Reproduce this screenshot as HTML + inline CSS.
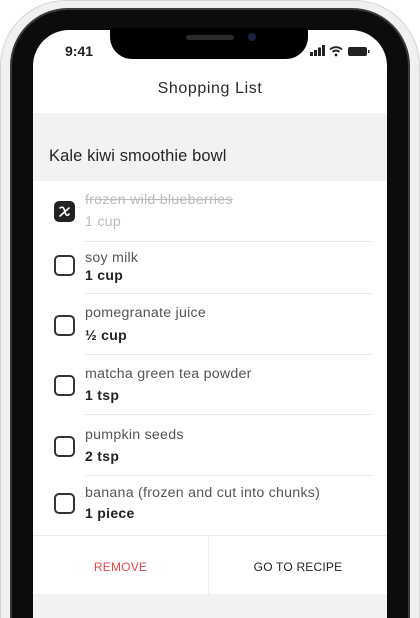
<!DOCTYPE html>
<html><head><style>
*{margin:0;padding:0;box-sizing:border-box}
html,body{width:420px;height:618px;overflow:hidden}
body{background:#fff;font-family:"Liberation Sans",sans-serif}
.wrap{position:relative;width:420px;height:618px;overflow:hidden}
.outer{position:absolute;left:0;top:0;width:420px;height:618px;border-radius:66px 66px 0 0;background:#f0f0f0;border:1px solid #d4d4d4;border-bottom:none}
.bezel{position:absolute;left:10px;top:8px;width:400px;height:610px;border-radius:58px 58px 0 0;background:#0c0c0c;border:2px solid #3a3a3a;border-bottom:none}
.screen{position:absolute;left:33px;top:30px;width:354px;height:588px;border-radius:36px 36px 0 0;background:#fff;overflow:hidden}
.notch{position:absolute;left:110px;top:28px;width:198px;height:31px;background:#000;border-radius:0 0 22px 22px}
.spk{position:absolute;left:186px;top:35px;width:48px;height:5px;border-radius:3px;background:#2a2a2a}
.cam{position:absolute;left:248px;top:33px;width:8px;height:8px;border-radius:50%;background:#1a2440}
.abs{position:absolute}
.time{left:65px;top:43px;font-weight:bold;font-size:14px;color:#222}
.hdr{left:33px;top:80px;width:354px;text-align:center;font-size:16px;color:#2a2a2a;letter-spacing:.6px}
.band{left:33px;top:113px;width:354px;height:68px;background:#f1f2f4}
.band2{left:33px;top:594px;width:354px;height:24px;background:#f1f2f4}
.title{left:49px;top:147px;font-size:16.5px;color:#252525;letter-spacing:.1px}
.cb{left:54px;width:21px;height:21px;border:2px solid #333;border-radius:5px}
.nm{left:85px;font-size:14.2px;color:#555;letter-spacing:.25px}
.qt{left:85px;font-size:14px;font-weight:bold;color:#222;letter-spacing:.3px}
.sep{left:85px;width:287px;height:1px;background:#e8e8e8}
.btns{left:33px;top:535px;width:354px;height:59px;border-top:1px solid #ececec}
.btns div{position:absolute;top:0;height:59px;line-height:62px;font-size:12px;text-align:center;letter-spacing:.2px}
</style></head><body><div class="wrap">
<div class="outer"></div>
<div class="bezel"></div>
<div class="screen"></div>
<div class="notch"></div><div class="spk"></div><div class="cam"></div>
<div class="abs time">9:41</div>
<svg class="abs" style="left:310px;top:45px" width="64" height="12">
<rect x="0" y="7" width="3" height="4" fill="#222"/><rect x="4" y="5" width="3" height="6" fill="#222"/><rect x="8" y="2.5" width="3" height="8.5" fill="#222"/><rect x="12" y="0" width="3" height="11" fill="#222"/>
<path d="M20 4.5a9 9 0 0 1 12 0M22.5 7a5 5 0 0 1 7 0" stroke="#222" stroke-width="1.8" fill="none"/><circle cx="26" cy="10" r="1.4" fill="#222"/>
<rect x="38" y="2" width="19" height="9" rx="2" fill="#222"/><rect x="58" y="5" width="1.5" height="3" fill="#222"/>
</svg>
<div class="abs hdr">Shopping List</div>
<div class="abs band"></div>
<div class="abs title">Kale kiwi smoothie bowl</div>

<div class="abs" style="left:54px;top:201px;width:21px;height:21px;border-radius:5px;background:#222"></div>
<svg class="abs" style="left:54px;top:201px" width="21" height="21"><path d="M6 7c3-2 4 0 5 4s3 4 4 2M15 7l-9 8" stroke="#fff" stroke-width="1.6" fill="none" stroke-linecap="round"/></svg>
<div class="abs nm" style="top:192px;color:#bbb;text-decoration:line-through">frozen wild blueberries</div>
<div class="abs nm" style="top:214px;color:#bbb">1 cup</div>
<div class="abs sep" style="top:241px"></div>

<div class="abs cb" style="top:255px"></div>
<div class="abs nm" style="top:250px">soy milk</div>
<div class="abs qt" style="top:267px">1 cup</div>
<div class="abs sep" style="top:293px"></div>

<div class="abs cb" style="top:315px"></div>
<div class="abs nm" style="top:305px">pomegranate juice</div>
<div class="abs qt" style="top:327px">½ cup</div>
<div class="abs sep" style="top:354px"></div>

<div class="abs cb" style="top:375px"></div>
<div class="abs nm" style="top:366px">matcha green tea powder</div>
<div class="abs qt" style="top:387px">1 tsp</div>
<div class="abs sep" style="top:414px"></div>

<div class="abs cb" style="top:436px"></div>
<div class="abs nm" style="top:427px">pumpkin seeds</div>
<div class="abs qt" style="top:448px">2 tsp</div>
<div class="abs sep" style="top:475px"></div>

<div class="abs cb" style="top:493px"></div>
<div class="abs nm" style="top:485px">banana (frozen and cut into chunks)</div>
<div class="abs qt" style="top:505px">1 piece</div>

<div class="abs btns">
<div style="left:0;width:176px;color:#e04848;border-right:1px solid #ececec">REMOVE</div>
<div style="left:176px;width:178px;color:#222">GO TO RECIPE</div>
</div>
<div class="abs band2"></div>
</div></body></html>
